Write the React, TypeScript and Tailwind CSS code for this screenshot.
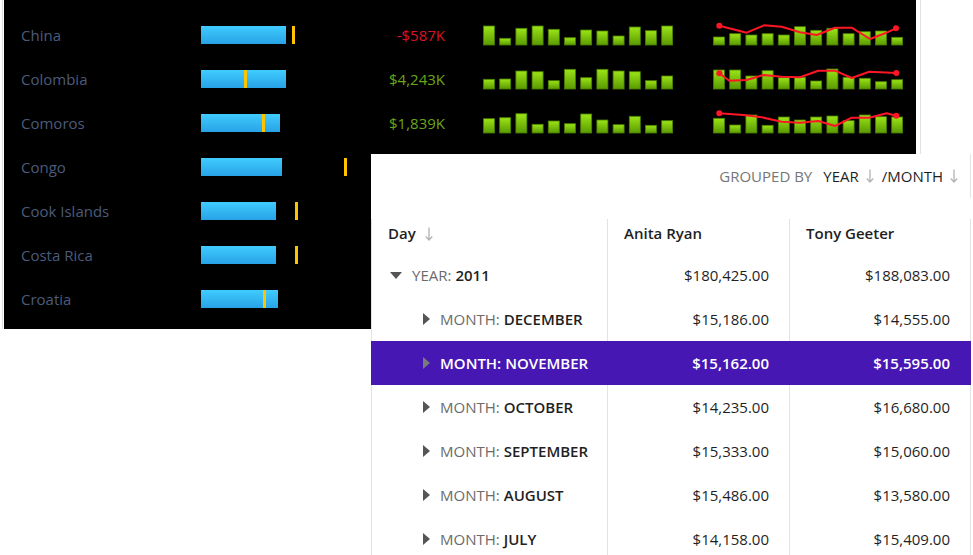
import React from 'react';

type Country = {
  name: string;
  bar: number;
  mark: number;
  value?: string;
  neg?: boolean;
  cols?: number[];
  lineBars?: number[];
  line?: [number, number][];
};

const countries: Country[] = [
  {
    name: 'China',
    bar: 85,
    mark: 91,
    value: '-$587K',
    neg: true,
    cols: [19, 6.7, 16.7, 19, 15.7, 7.3, 15, 14, 9, 18, 14.3, 19],
    lineBars: [8, 11.3, 10, 11.3, 10, 18.3, 14.7, 16.7, 11.3, 13.3, 14, 7.7],
    line: [
      [6.3, 12.7], [33.7, 19.7], [51, 12.3], [68.7, 13.7], [87, 19.3], [103.7, 22],
      [122, 14.7], [138.7, 14.7], [157, 26], [172, 20.3], [183, 15.3],
    ],
  },
  {
    name: 'Colombia',
    bar: 85,
    mark: 43,
    value: '$4,243K',
    cols: [9.7, 10, 18, 17.3, 8.3, 19.7, 11.3, 19.7, 18, 17.3, 8.3, 13],
    lineBars: [19, 19, 13, 18.3, 11.3, 11.7, 8, 20, 11.7, 10.7, 7.3, 9.3],
    line: [
      [6.3, 16.3], [16.3, 23.7], [33.7, 23], [50.3, 18], [68.7, 19.7], [87, 20.3],
      [105.3, 13.7], [122, 13.7], [138.7, 21], [156.3, 14.7], [183.3, 16],
    ],
  },
  {
    name: 'Comoros',
    bar: 79,
    mark: 61,
    value: '$1,839K',
    cols: [14.3, 15.3, 19.3, 8.7, 12, 9.3, 19, 13, 8.3, 16.7, 7.7, 12.3],
    lineBars: [14.7, 8, 18, 7.7, 16, 13, 16, 17, 12.3, 18, 16.3, 16],
    line: [
      [6.3, 12.3], [30.3, 14], [48.7, 16.3], [68.7, 20.7], [87, 21.7], [105.3, 20],
      [122, 25], [138.7, 16.7], [156.3, 16.7], [173.7, 12.3], [183.3, 14.7],
    ],
  },
  { name: 'Congo', bar: 81, mark: 143 },
  { name: 'Cook Islands', bar: 75, mark: 94 },
  { name: 'Costa Rica', bar: 75, mark: 94 },
  { name: 'Croatia', bar: 77, mark: 62 },
];

const months = [
  { name: 'DECEMBER', a: '$15,186.00', t: '$14,555.00' },
  { name: 'NOVEMBER', a: '$15,162.00', t: '$15,595.00', selected: true },
  { name: 'OCTOBER', a: '$14,235.00', t: '$16,680.00' },
  { name: 'SEPTEMBER', a: '$15,333.00', t: '$15,060.00' },
  { name: 'AUGUST', a: '$15,486.00', t: '$13,580.00' },
  { name: 'JULY', a: '$14,158.00', t: '$15,409.00' },
];

function Bars({ heights, id }: { heights: number[]; id: string }) {
  return (
    <>
      <defs>
        <linearGradient id={id} x1="0" y1="0" x2="0" y2="1">
          <stop offset="0" stopColor="#9be417" />
          <stop offset="1" stopColor="#5a9a02" />
        </linearGradient>
      </defs>
      {heights.map((h, i) => (
        <rect
          key={i}
          x={i * 16.2 + 0.5}
          y={32 - h}
          width={11}
          height={h}
          fill={`url(#${id})`}
          stroke="#4a7e00"
          strokeWidth={0.8}
        />
      ))}
    </>
  );
}

function ArrowDown() {
  return (
    <svg width="8" height="14" viewBox="0 0 8 14" className="shrink-0">
      <path d="M4 0.5V13M0.8 9.5L4 13L7.2 9.5" fill="none" stroke="#b3b3b3" strokeWidth="1.3" />
    </svg>
  );
}

function Caret({ open, color }: { open?: boolean; color: string }) {
  if (open) {
    return (
      <svg width="12" height="7" viewBox="0 0 12 7" className="shrink-0">
        <path d="M0 0H12L6 7Z" fill={color} />
      </svg>
    );
  }
  return (
    <svg width="7" height="12" viewBox="0 0 7 12" className="shrink-0">
      <path d="M0 0L7 6L0 12Z" fill={color} />
    </svg>
  );
}

export default function App() {
  return (
    <div className="relative w-[973px] h-[555px] bg-white overflow-hidden font-['Open_Sans',sans-serif] text-[15px]">
      <div className="absolute left-[2px] top-0 w-px h-[329px] bg-[#dcdcdc]" />
      <div className="absolute left-[920px] top-0 w-px h-[154px] bg-[#e2e2e2]" />

      {/* dark dashboard panel */}
      <div className="absolute left-[4px] top-0 w-[912px] h-[329px] bg-black pt-[13px] pl-[17px]">
        {countries.map((c, r) => (
          <div key={c.name} className="flex items-center h-[44px]">
            <div className="w-[180px] text-[#4b5b7b] leading-none">{c.name}</div>
            <div className="relative w-[164px] h-[18px]">
              <div
                className="h-full bg-linear-to-b from-[#40ccfe] to-[#28a2e6]"
                style={{ width: c.bar }}
              />
              <div className="absolute top-0 w-[3px] h-full bg-[#ffc400]" style={{ left: c.mark }} />
            </div>
            {c.value && (
              <div className={`w-[80px] text-right leading-none ${c.neg ? 'text-[#d81228]' : 'text-[#6aa619]'}`}>
                {c.value}
              </div>
            )}
            {c.cols && (
              <svg width="190" height="44" className="ml-[38px] shrink-0">
                <Bars heights={c.cols} id={`cb${r}`} />
              </svg>
            )}
            {c.lineBars && c.line && (
              <svg width="190" height="44" className="ml-[40px] shrink-0">
                <Bars heights={c.lineBars} id={`lb${r}`} />
                <polyline
                  points={c.line.map((p) => p.join(',')).join(' ')}
                  fill="none"
                  stroke="#ff1626"
                  strokeWidth="2"
                  strokeLinejoin="round"
                />
                <circle cx={c.line[0][0]} cy={c.line[0][1]} r="3" fill="#ff1626" />
                <circle cx={c.line[c.line.length - 1][0]} cy={c.line[c.line.length - 1][1]} r="3" fill="#ff1626" />
              </svg>
            )}
          </div>
        ))}
      </div>

      {/* grouped grid panel */}
      <div className="absolute left-[371px] top-[154px] w-[600px] h-[401px] bg-white">
        <div className="h-[44px] flex items-center justify-end pr-[12px] border-r border-[#e3e3e3] text-[#1f1f1f]">
          <span className="text-[#767676] mr-[11px]">GROUPED BY</span>
          <span>YEAR</span>
          <span className="ml-[7px] mr-[8px]"><ArrowDown /></span>
          <span>/MONTH</span>
          <span className="ml-[7px]"><ArrowDown /></span>
        </div>

        <div className="mt-[21px]">
          <div className="flex h-[34px] font-semibold text-[#1f1f1f]">
            <div className="w-[236px] border-l border-[#e3e3e3] pl-[16px] pb-[5px] flex items-center gap-[9px]">
              <span>Day</span>
              <ArrowDown />
            </div>
            <div className="w-[182px] border-l border-[#e3e3e3] pl-[16px] pb-[5px] flex items-center">Anita Ryan</div>
            <div className="w-[182px] border-x border-[#e3e3e3] pl-[16px] pb-[5px] flex items-center">Tony Geeter</div>
          </div>

          <div className="flex h-[44px] text-[#1f1f1f]">
            <div className="w-[236px] border-l border-[#e3e3e3] pl-[18px] flex items-center">
              <Caret open color="#555555" />
              <span className="ml-[10px] text-[#6b6b6b]">YEAR:</span>
              <span className="ml-[4px] font-semibold">2011</span>
            </div>
            <div className="w-[182px] border-l border-[#e3e3e3] pr-[20px] flex items-center justify-end">$180,425.00</div>
            <div className="w-[182px] border-x border-[#e3e3e3] pr-[20px] flex items-center justify-end">$188,083.00</div>
          </div>

          {months.map((m) => {
            const line = m.selected ? 'border-[#4617b3]' : 'border-[#e3e3e3]';
            return (
              <div
                key={m.name}
                className={`flex h-[44px] ${m.selected ? 'bg-[#4617b3] text-white font-semibold' : 'text-[#1f1f1f]'}`}
              >
                <div className={`w-[236px] border-l ${line} pl-[51px] flex items-center`}>
                  <Caret color={m.selected ? '#7a7a7a' : '#555555'} />
                  <span className={`ml-[10px] ${m.selected ? '' : 'text-[#6b6b6b]'}`}>MONTH:</span>
                  <span className="ml-[4px] font-semibold">{m.name}</span>
                </div>
                <div className={`w-[182px] border-l ${line} pr-[20px] flex items-center justify-end`}>{m.a}</div>
                <div className={`w-[182px] border-x ${line} pr-[20px] flex items-center justify-end`}>{m.t}</div>
              </div>
            );
          })}
        </div>
      </div>
    </div>
  );
}
